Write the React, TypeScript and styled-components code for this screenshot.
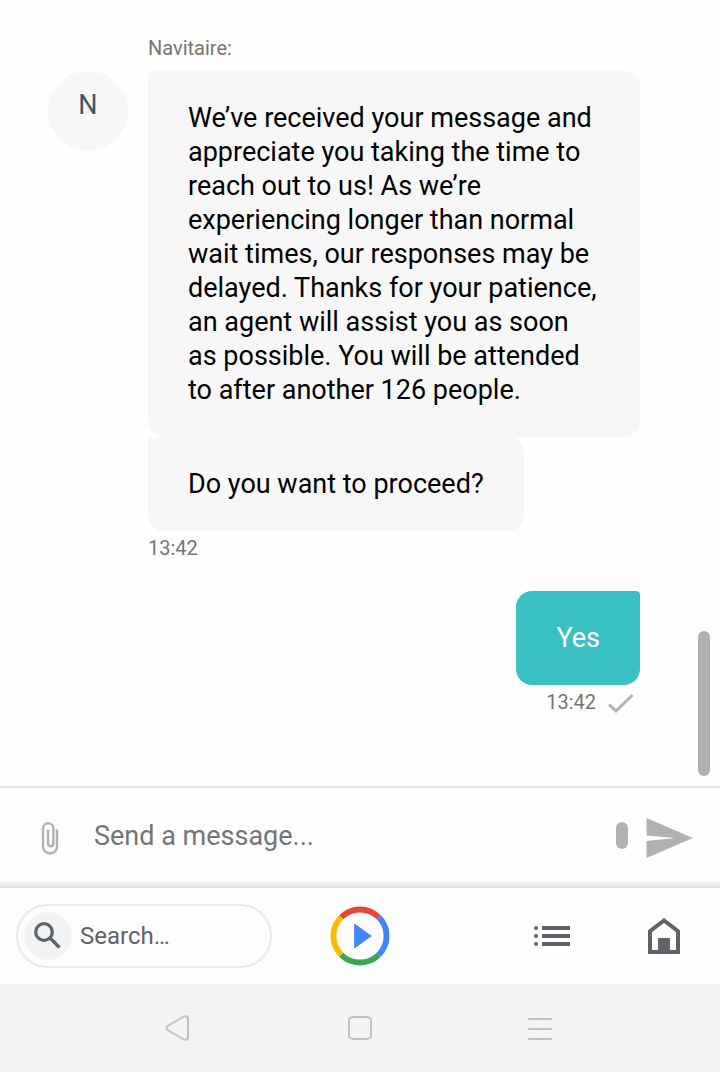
import React from 'react';
import styled, { createGlobalStyle } from 'styled-components';

const GlobalStyle = createGlobalStyle`
  *, *::before, *::after { box-sizing: border-box; }
  body { margin: 0; background: #fefefe; font-family: Roboto, "Liberation Sans", sans-serif; }
  button { border: 0; padding: 0; background: none; cursor: pointer; }
  svg { display: block; }
`;

const Screen = styled.div`
  display: flex;
  flex-direction: column;
  min-height: 100vh;
`;

const Conversation = styled.main`
  position: relative;
  flex: 1;
  display: flex;
  flex-direction: column;
  gap: 26px;
  padding: 31px 80px 0 48px;
`;

const Incoming = styled.section`
  display: grid;
  grid-template-columns: 80px minmax(0, 1fr);
  column-gap: 20px;
`;

const Sender = styled.div`
  grid-column: 2;
  height: 40px;
  font-size: 20px;
  line-height: 34px;
  color: #757575;
`;

const Avatar = styled.div`
  width: 80px;
  height: 80px;
  border-radius: 50%;
  background: #f7f7f7;
  color: #3f5766;
  font-size: 27px;
  line-height: 68px;
  text-align: center;
`;

const Messages = styled.div`
  display: flex;
  flex-direction: column;
  align-items: flex-start;
`;

const Outgoing = styled.section`
  display: flex;
  flex-direction: column;
  align-items: flex-end;
`;

const Bubble = styled.p<{ $own?: boolean }>`
  margin: 0;
  padding: 30px 40px;
  border-radius: ${p => (p.$own ? '16px 4px 16px 16px' : '4px 16px 16px 16px')};
  background: ${p => (p.$own ? '#3ac0c3' : '#f7f7f7')};
  color: ${p => (p.$own ? '#fff' : '#000')};
  font-size: 27px;
  line-height: 34px;
`;

const Meta = styled.div`
  display: flex;
  align-items: center;
  gap: 12px;
  font-size: 20px;
  line-height: 34px;
  color: #757575;
`;

const Sent = styled.svg`
  margin-right: 6px;
`;

const ScrollThumb = styled.div`
  position: absolute;
  right: 10px;
  bottom: 10px;
  width: 12px;
  height: 145px;
  border-radius: 6px;
  background: #b1b1b1;
`;

const Composer = styled.form`
  display: flex;
  align-items: center;
  height: 102px;
  padding: 0 26px 0 36px;
  border-top: 2px solid #e2e2e2;
  background: linear-gradient(to top, #dcdcdc 0, #e8e8e8 2px, #fefefe 8px);
`;

const IconButton = styled.button`
  display: flex;
  align-items: center;
  justify-content: center;
`;

const MessageInput = styled.input`
  flex: 1;
  min-width: 0;
  height: 64px;
  margin-left: 28px;
  padding: 0 0 4px;
  border: 0;
  outline: 0;
  background: transparent;
  font: 27px Roboto, "Liberation Sans", sans-serif;
  &::placeholder { color: #757575; opacity: 1; }
`;

const InputThumb = styled.div`
  width: 12px;
  height: 27px;
  margin: 0 18px 6px 0;
  border-radius: 6px;
  background: #b1b1b1;
`;

const BrowserBar = styled.nav`
  display: grid;
  grid-template-columns: 1fr 60px 1fr;
  align-items: center;
  height: 96px;
  padding: 0 16px;
`;

const SearchBox = styled.label`
  display: flex;
  align-items: center;
  gap: 8px;
  width: 256px;
  height: 64px;
  padding: 0 6px;
  border: 2px solid #e8eaea;
  border-radius: 32px;
`;

const SearchBadge = styled.span`
  flex: none;
  display: flex;
  align-items: center;
  justify-content: center;
  width: 48px;
  height: 48px;
  border-radius: 50%;
  background: #f1f3f5;
`;

const SearchInput = styled.input`
  flex: 1;
  min-width: 0;
  padding: 0;
  border: 0;
  outline: 0;
  background: transparent;
  font: 24px Roboto, "Liberation Sans", sans-serif;
  &::placeholder { color: #5f6368; opacity: 1; }
`;

const BarActions = styled.div`
  display: flex;
  justify-content: flex-end;
  gap: 74px;
  padding-right: 20px;
`;

const SystemBar = styled.nav`
  display: flex;
  align-items: center;
  justify-content: center;
  gap: 140px;
  height: 88px;
  background: #f1f3f5;
`;

export default function App() {
  return (
    <Screen>
      <GlobalStyle />
      <Conversation>
        <Incoming>
          <Sender>Navitaire:</Sender>
          <Avatar>N</Avatar>
          <Messages>
            <Bubble>
              We’ve received your message and appreciate you taking the time to reach out to us! As
              we’re experiencing longer than normal wait times, our responses may be delayed. Thanks
              for your patience, an agent will assist you as soon as possible. You will be attended
              to after another 126 people.
            </Bubble>
            <Bubble>Do you want to proceed?</Bubble>
            <Meta><time>13:42</time></Meta>
          </Messages>
        </Incoming>
        <Outgoing>
          <Bubble $own>Yes</Bubble>
          <Meta>
            <time>13:42</time>
            <Sent width="26" height="26" viewBox="0 0 26 26" role="img" aria-label="Sent">
              <path d="M1 15.5 8 22 24.5 6" fill="none" stroke="#b1b1b1" strokeWidth="3" />
            </Sent>
          </Meta>
        </Outgoing>
        <ScrollThumb />
      </Conversation>

      <Composer onSubmit={e => e.preventDefault()}>
        <IconButton type="button" aria-label="Attach a file">
          <svg width="30" height="38" viewBox="0 0 30 38">
            <path
              d="M21 10.5V27.5a7 7 0 0 1-14 0V9.5a5.2 5.2 0 0 1 10.4 0V24.5a2.7 2.7 0 0 1-5.4 0V10.5"
              fill="none"
              stroke="#b1b1b1"
              strokeWidth="2.4"
            />
          </svg>
        </IconButton>
        <MessageInput aria-label="Message" placeholder="Send a message..." />
        <InputThumb />
        <IconButton type="submit" aria-label="Send">
          <svg width="48" height="40" viewBox="0 0 48 40">
            <path d="M0.5 0 47 20 0.5 40V23L29 20 0.5 17.5Z" fill="#b1b1b1" />
          </svg>
        </IconButton>
      </Composer>

      <BrowserBar aria-label="Browser">
        <SearchBox>
          <SearchBadge>
            <svg width="28" height="28" viewBox="0 0 28 28" fill="none" stroke="#5f6368">
              <circle cx="10" cy="10" r="8.3" strokeWidth="3.2" />
              <path d="m16 16 9.5 9.5" strokeWidth="3.6" />
            </svg>
          </SearchBadge>
          <SearchInput type="text" aria-label="Search" placeholder="Search…" />
        </SearchBox>
        <IconButton type="button" aria-label="Play">
          <svg width="60" height="60" viewBox="-0.5 -0.5 61 61" fill="none" strokeWidth="6">
            <path d="M10.9 10.9a27 27 0 0 1 38.2 0" stroke="#e8453a" />
            <path d="M49.1 10.9a27 27 0 0 1 0 38.2" stroke="#4285f4" />
            <path d="M49.1 49.1a27 27 0 0 1-38.2 0" stroke="#34a853" />
            <path d="M10.9 49.1a27 27 0 0 1 0-38.2" stroke="#fbbc05" />
            <path d="M24 17v26l18-13Z" fill="#4285f4" />
          </svg>
        </IconButton>
        <BarActions>
          <IconButton type="button" aria-label="List">
            <svg width="36" height="36" viewBox="0 0 36 36" fill="#5f6368">
              <circle cx="2" cy="10" r="2" />
              <circle cx="2" cy="18" r="2" />
              <circle cx="2" cy="26" r="2" />
              <path d="M8 8h28v4H8zM8 16h28v4H8zM8 24h28v4H8z" />
            </svg>
          </IconButton>
          <IconButton type="button" aria-label="Home">
            <svg width="40" height="36" viewBox="-4 0 40 36">
              <path d="M2 34V13.2L16 2.5 30 13.2V34Z" fill="none" stroke="#5f6368" strokeWidth="4" />
              <path d="M10 20h12v14H10z" fill="#5f6368" />
            </svg>
          </IconButton>
        </BarActions>
      </BrowserBar>

      <SystemBar aria-label="System">
        <IconButton type="button" aria-label="Back">
          <svg width="40" height="40" viewBox="0 0 40 40">
            <path
              d="M7.6 18 23.2 8.9Q28 7 28 11V29Q28 33 23.2 31.1L7.6 22Q5.4 20 7.6 18Z"
              fill="none"
              stroke="#bfc1c3"
              strokeWidth="2"
            />
          </svg>
        </IconButton>
        <IconButton type="button" aria-label="Home screen">
          <svg width="40" height="40" viewBox="0 0 40 40">
            <rect x="9" y="9" width="22" height="22" rx="4" fill="none" stroke="#bfc1c3" strokeWidth="2" />
          </svg>
        </IconButton>
        <IconButton type="button" aria-label="Recent apps">
          <svg width="40" height="40" viewBox="0 0 40 40">
            <path d="M9 11h22M9 21h22M9 31h22" stroke="#bfc1c3" strokeWidth="2" strokeLinecap="round" />
          </svg>
        </IconButton>
      </SystemBar>
    </Screen>
  );
}
